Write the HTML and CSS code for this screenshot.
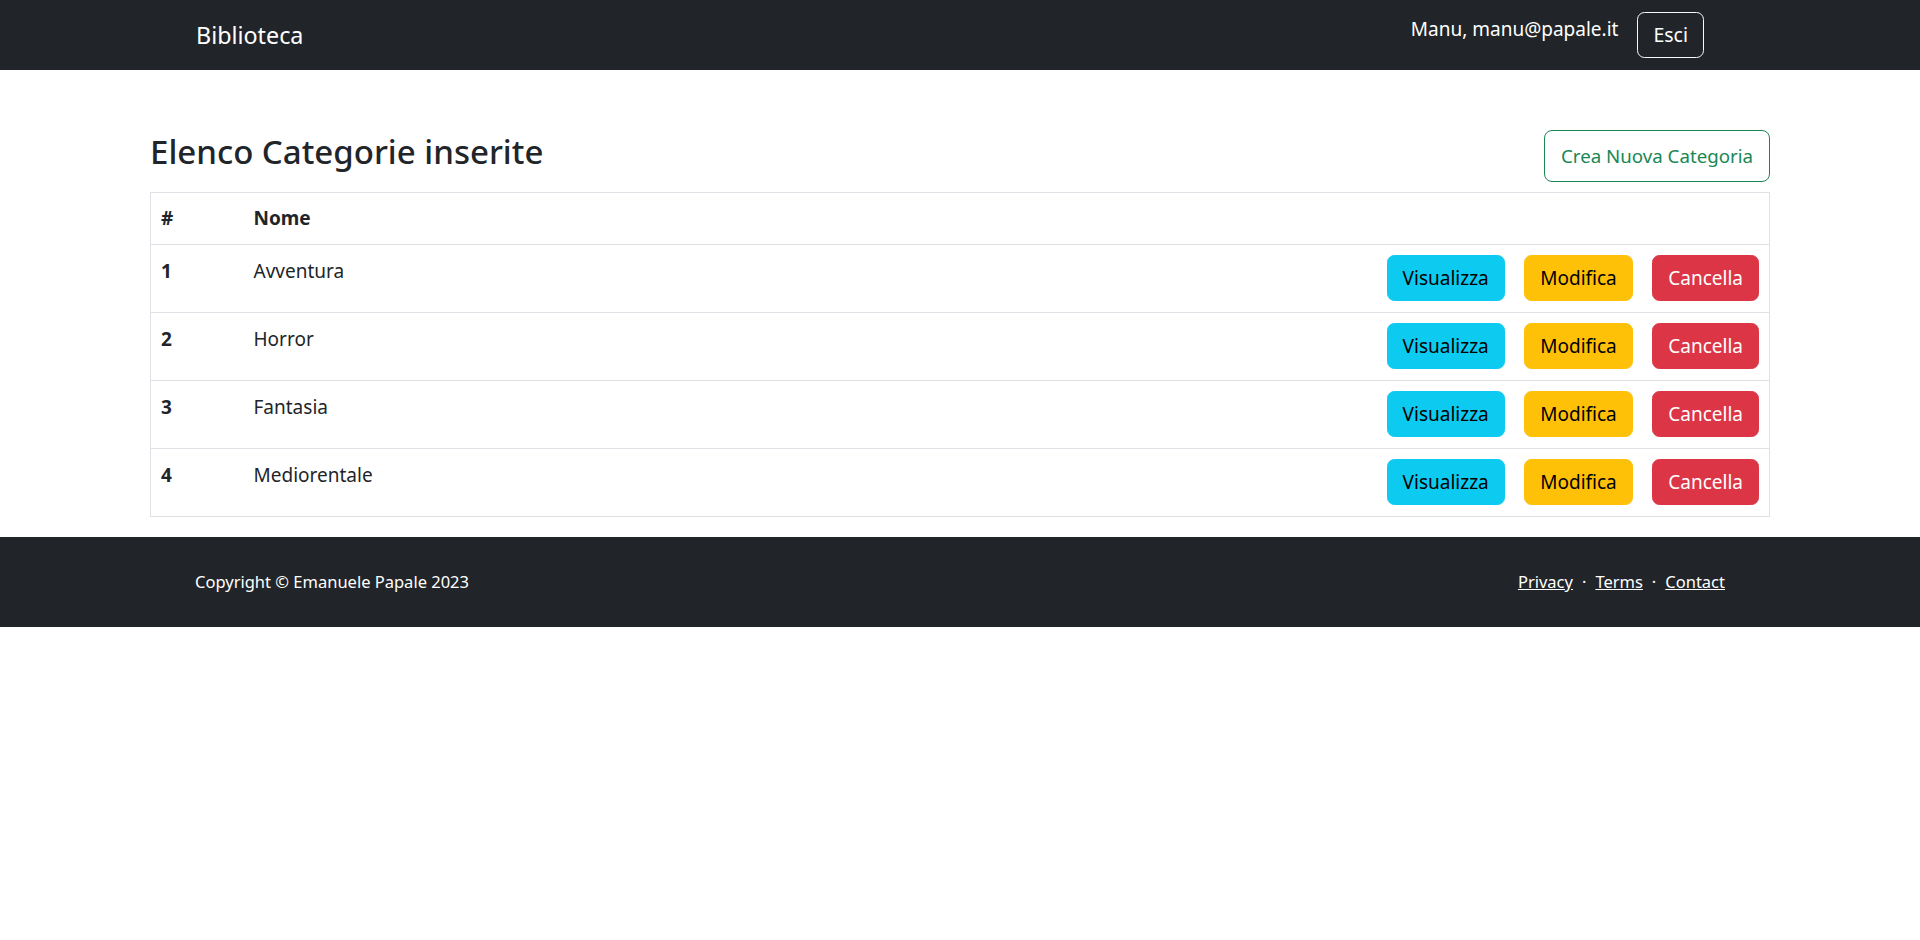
FILE: index.html
```html
<!DOCTYPE html>
<html lang="it">
<head>
<meta charset="utf-8">
<title>Biblioteca - Categorie</title>
<link rel="stylesheet" href="styles.css">
</head>
<body>
<nav class="navbar">
  <div class="nav-inner">
    <a class="brand" href="#">Biblioteca</a>
    <div class="nav-right">
      <span class="user">Manu, manu@papale.it</span>
      <button class="btn btn-outline-light">Esci</button>
    </div>
  </div>
</nav>

<main class="container">
  <div class="page-head">
    <h3 class="title">Elenco Categorie inserite</h3>
    <a class="btn btn-outline-success" href="#">Crea Nuova Categoria</a>
  </div>
  <table class="table">
    <thead>
      <tr>
        <th class="col-id">#</th>
        <th>Nome</th>
        <th class="col-actions"></th>
      </tr>
    </thead>
    <tbody>
      <tr>
        <th class="col-id">1</th>
        <td>Avventura</td>
        <td class="col-actions"><div class="actions"><a class="btn btn-info" href="#">Visualizza</a><a class="btn btn-warning" href="#">Modifica</a><a class="btn btn-danger" href="#">Cancella</a></div></td>
      </tr>
      <tr>
        <th class="col-id">2</th>
        <td>Horror</td>
        <td class="col-actions"><div class="actions"><a class="btn btn-info" href="#">Visualizza</a><a class="btn btn-warning" href="#">Modifica</a><a class="btn btn-danger" href="#">Cancella</a></div></td>
      </tr>
      <tr>
        <th class="col-id">3</th>
        <td>Fantasia</td>
        <td class="col-actions"><div class="actions"><a class="btn btn-info" href="#">Visualizza</a><a class="btn btn-warning" href="#">Modifica</a><a class="btn btn-danger" href="#">Cancella</a></div></td>
      </tr>
      <tr>
        <th class="col-id">4</th>
        <td>Mediorentale</td>
        <td class="col-actions"><div class="actions"><a class="btn btn-info" href="#">Visualizza</a><a class="btn btn-warning" href="#">Modifica</a><a class="btn btn-danger" href="#">Cancella</a></div></td>
      </tr>
    </tbody>
  </table>
</main>

<footer class="footer">
  <div class="footer-inner">
    <div class="copy">Copyright &copy; Emanuele Papale 2023</div>
    <div class="links">
      <a href="#">Privacy</a><span class="dot">&middot;</span><a href="#">Terms</a><span class="dot">&middot;</span><a href="#">Contact</a>
    </div>
  </div>
</footer>
</body>
</html>
```

FILE: styles.css
```css
* { box-sizing: border-box; }

body {
  margin: 0;
  font-family: "Noto Sans", "Open Sans", sans-serif;
  font-size: 19px;
  line-height: 30px;
  color: #212529;
  background: #fff;
}

a { text-decoration: none; }

/* Navbar */
.navbar {
  background: #212529;
  height: 70px;
}
.nav-inner {
  width: 1650px;
  height: 70px;
  margin: 0 auto;
  padding: 0 60px;
  display: flex;
  align-items: center;
  justify-content: space-between;
}
.brand {
  color: #fff;
  font-size: 23.3px;
  line-height: 36px;
  margin-left: 1px;
}
.nav-right {
  display: flex;
  align-items: center;
  gap: 19px;
  margin-right: 21px;
}
.user {
  color: #fff;
  font-size: 19px;
  line-height: 30px;
  margin-bottom: 12px;
}

/* Buttons */
.btn {
  display: inline-flex;
  align-items: center;
  justify-content: center;
  font-family: inherit;
  font-size: 19px;
  line-height: 30px;
  border: 1px solid transparent;
  border-radius: 7.5px;
  padding: 0 15px;
  cursor: pointer;
  white-space: nowrap;
}
.btn-outline-light {
  height: 46px;
  background: transparent;
  color: #fff;
  border-color: #f8f9fa;
  font-size: 19.5px;
}
.btn-outline-success {
  height: 52px;
  padding: 0 16px;
  font-size: 18.7px;
  color: #198754;
  border-color: #198754;
  border-radius: 8px;
}
.btn-info {
  height: 46px;
  background: #0dcaf0;
  border-color: #0dcaf0;
  color: #000;
}
.btn-warning {
  height: 46px;
  background: #ffc107;
  border-color: #ffc107;
  color: #000;
}
.btn-danger {
  height: 46px;
  background: #dc3545;
  border-color: #dc3545;
  color: #fff;
}

/* Main */
.container {
  width: 1650px;
  margin: 60px auto 0;
  padding: 0 15px 20px;
}
.page-head {
  display: flex;
  justify-content: space-between;
  align-items: flex-start;
  margin-bottom: 10px;
}
.title {
  margin: 0;
  padding-top: 1px;
  font-size: 33px;
  line-height: 42px;
  font-weight: 500;
}

.table {
  width: 100%;
  border-collapse: collapse;
  border: 1px solid #dee2e6;
}
.table tr {
  border-bottom: 1px solid #dee2e6;
}
.table th,
.table td {
  padding: 11px 10px 10px;
  text-align: left;
  vertical-align: top;
}
.table thead th {
  padding: 10px 10px 11px;
}
.table td.col-actions {
  padding: 10px 10px 11px;
}
.table th { font-weight: 700; }
.col-id { width: 93px; }
.col-actions { width: 1%; white-space: nowrap; }
.actions {
  display: flex;
  justify-content: flex-end;
  gap: 19.5px;
}

/* Footer */
.footer {
  background: #212529;
  height: 90px;
}
.footer-inner {
  width: 1650px;
  height: 90px;
  margin: 0 auto;
  padding: 0 60px;
  display: flex;
  align-items: center;
  justify-content: space-between;
  color: #fff;
  font-size: 16.5px;
}
.links a {
  color: #fff;
  text-decoration: underline;
}
.dot {
  margin: 0 9px;
}
```
